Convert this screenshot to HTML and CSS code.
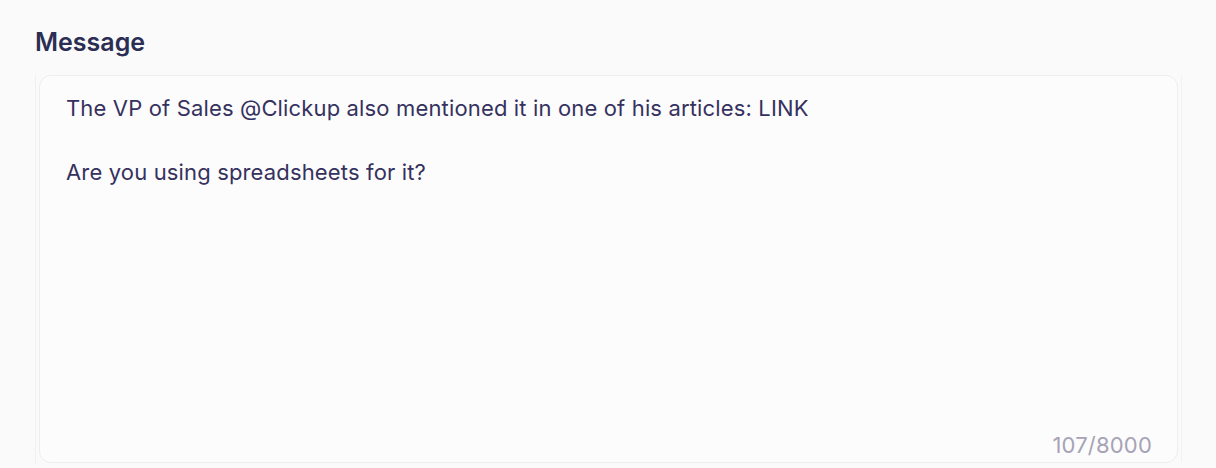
FILE: index.html
```html
<!DOCTYPE html>
<html lang="en">
<head>
<meta charset="utf-8">
<title>Message</title>
<link rel="stylesheet" href="styles.css">
</head>
<body>
<div class="field">
  <label class="label" for="msg">Message</label>
  <div class="frame">
    <div class="box">
      <div class="text" id="msg">
        <p>The VP of Sales @Clickup also mentioned it in one of his articles: LINK</p>
        <p class="blank">&nbsp;</p>
        <p>Are you using spreadsheets for it?</p>
      </div>
      <div class="counter">107/8000</div>
    </div>
  </div>
</div>
</body>
</html>
```

FILE: styles.css
```css
html, body {
  margin: 0;
  padding: 0;
  background: #fafafb;
  font-family: Inter, "Noto Sans", sans-serif;
}
.field {
  padding: 26px 0 0 35px;
  width: 1147px;
}
.label {
  display: block;
  font-size: 25px;
  font-weight: 600;
  line-height: 32px;
  color: #2b2e52;
  margin-bottom: 17px;
}
.frame {
  border-left: 1px solid #f0f0f3;
  border-right: 1px solid #f2f2f5;
  padding: 0 3px;
}
.box {
  height: 388px;
  background: #fdfcfd;
  border: 1px solid #ededf2;
  border-radius: 12px;
  display: flex;
  flex-direction: column;
  padding: 16px 25px 3px 26px;
  box-sizing: border-box;
}
.text {
  flex: 1;
  font-size: 22px;
  line-height: 32px;
  letter-spacing: 0.15px;
  color: #35325d;
}
.text p {
  margin: 0;
}
.counter {
  align-self: flex-end;
  font-size: 22px;
  line-height: 28px;
  letter-spacing: 0.2px;
  color: #a5a3b5;
}
```
